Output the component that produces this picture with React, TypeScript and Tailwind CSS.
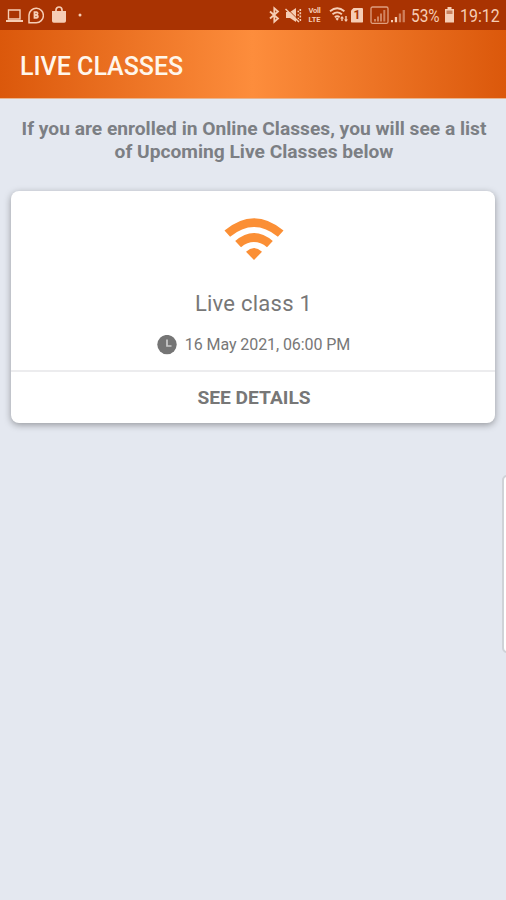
import type { ReactNode } from "react";

interface liveClassType {
  id: number;
  title: string;
  date: string;
}

const liveClasses: liveClassType[] = [
  { id: 1, title: "Live class 1", date: "16 May 2021, 06:00 PM" },
];

const Glyph = ({ width, className = "", children }: { width: number; className?: string; children: ReactNode }) => (
  <svg width={width} height={18} viewBox={`0 0 ${width} 18`} className={`shrink-0 ${className}`} fill="currentColor">
    {children}
  </svg>
);

const StatusBar = () => (
  <div className="flex h-[30px] items-center bg-[#a93302] text-[#f6cdb5]">
    <Glyph width={18} className="ml-[5px]">
      <path d="M3.5 4h11.5v9H3.5z" fill="none" stroke="currentColor" strokeWidth="1.4" />
      <path d="M1 14h17v2H1z" />
    </Glyph>
    <Glyph width={16} className="ml-[5px]">
      <path d="M1 16.7V9a7.2 7.2 0 1 1 7.2 7.7z" fill="none" stroke="currentColor" strokeWidth="1.5" />
      <path d="M5.6 5.3h3a2 2 0 0 1 1.2 3.5 2.1 2.1 0 0 1-1.2 3.9h-3z" />
      <path d="M7.5 7h1v1h-1zM7.5 10h1v1h-1z" className="fill-[#a93302]" />
    </Glyph>
    <Glyph width={16} className="ml-[7px]">
      <path d="M1 5h14v10a1.8 1.8 0 0 1-1.8 1.8H2.8A1.8 1.8 0 0 1 1 15z" />
      <path d="M5 7V4a3 3 0 0 1 6 0V7" fill="none" stroke="currentColor" strokeWidth="1.7" />
    </Glyph>
    <Glyph width={4} className="ml-[11px]">
      <circle cx="2" cy="9" r="1.5" />
    </Glyph>

    <div className="ml-auto flex items-center pr-[6px]">
      <Glyph width={11}>
        <path d="m1 5.5 8 7-3.7 3.3V2.2L9 5.5l-8 7" fill="none" stroke="currentColor" strokeWidth="1.8" />
      </Glyph>
      <Glyph width={17} className="ml-[5px]">
        <path d="M1 6h4l6-4v14l-6-4H1z" />
        <path d="M12.5 5.5h1.5M12.5 9h1.5M12.5 12.5h1.5M15.3 3v13" fill="none" stroke="currentColor" strokeWidth="1.6" strokeDasharray="2 1.3" />
        <path d="m2.5 3 12 12" fill="none" className="stroke-[#a93302]" strokeWidth="1" />
        <path d="m.5 3 13.5 13" fill="none" stroke="currentColor" strokeWidth="1.5" />
      </Glyph>
      <div className="ml-[4px] flex w-[17px] flex-col items-center gap-[2px] text-[7.5px] leading-[7px] font-bold whitespace-nowrap">
        <p className="h-[7px] overflow-hidden tracking-[-0.2px]">Voll</p>
        <p className="h-[7px] overflow-hidden">LTE</p>
      </div>
      <Glyph width={20} className="ml-[6px]">
        <path d="M1 5.2q7.2-6 14.4 0M3.5 8.3q4.7-3.9 9.4 0M5.8 11.2q2.4-2 4.8 0" fill="none" stroke="currentColor" strokeWidth="1.8" />
        <path d="m6.5 12.8 1.7-1 1.7 1-1.7 1.9z" />
        <path d="m11 12.5 2-2.5 2 2.5h-1.3V15h-1.4v-2.5zM15 13.5h1.3V10h1.4v3.5H19L17 16z" />
      </Glyph>
      <span className="ml-[2px] flex h-[15px] w-3 items-center justify-center rounded-[1px] bg-[#f6cdb5] text-[12px] font-bold text-[#a93302] [clip-path:polygon(3px_0,100%_0,100%_100%,0_100%,0_3px)]">
        1
      </span>
      <Glyph width={19} className="ml-[7px] opacity-70">
        <rect x="1" y="1" width="17" height="16.3" rx="1.5" fill="none" stroke="currentColor" strokeWidth="1.3" />
        <path d="M4 13h2v2.5H4zM7 10.5h2v5H7zM10 7.5h2v8h-2zM13.3 4h2v11.5h-2z" opacity=".75" />
      </Glyph>
      <Glyph width={16} className="ml-[1px]">
        <path d="M1 14h2v2.3H1zM4.8 11h2.3v5.3H4.8z" />
        <path d="M8.8 7.5h2.3v8.8H8.8zM12.6 4h2.3v12.3h-2.3z" opacity=".5" />
      </Glyph>
      <span className="mt-[3px] ml-[5px] w-[30px] origin-left scale-x-[.88] text-[17.5px] leading-none whitespace-nowrap">53%</span>
      <Glyph width={11} className="ml-[3px]">
        <path d="M3.5 1h4v2H10v13.5H1V3h2.5z" />
        <path d="M2.5 4.5h6V8h-6z" className="fill-[#c9805d]" />
      </Glyph>
      <span className="mt-[3px] ml-[5px] w-10 origin-left scale-x-[.91] text-[17.5px] leading-none whitespace-nowrap">19:12</span>
    </div>
  </div>
);

const Header = () => (
  <header className="flex h-[69px] items-center border-b border-[#e9b58f] bg-[linear-gradient(90deg,#db580b_0%,#fd8d3c_50%,#db580b_100%)] pt-[5px] pl-5">
    <h1 className="text-[25px] font-medium text-[#fff6eb]">LIVE CLASSES</h1>
  </header>
);

const ClassCard = ({ title, date }: { title: string; date: string }) => (
  <div className="mx-[11px] flex h-[232px] flex-col items-center rounded-lg bg-white text-[#777] shadow-[0_2px_7px_rgba(0,0,0,0.35)]">
    <svg width="60" height="44" viewBox="0 0 60 44" className="mt-[26px] ml-[1px] shrink-0 text-[#fb8f35]" fill="currentColor">
      <path d="M.5 13.5Q30-11 59.5 13.5l-5.6 6.2Q30 .3 6.1 19.7z" />
      <path d="M11.2 24Q30 8 48.8 24L43 30.2q-13-10.2-26 0z" />
      <path d="M22 34.8q8-7.4 16 0L30 43z" />
    </svg>
    <h2 className="mt-[27px] ml-[1px] text-[22px] leading-8 tracking-[0.25px]">{title}</h2>
    <div className="mt-[13px] ml-[1px] flex h-6 items-center text-base">
      <svg width="20" height="20" viewBox="0 0 20 20" className="mr-2">
        <circle cx="10" cy="9.6" r="9.7" fill="#757575" />
        <path d="M10 4.5V11h4.5" fill="none" stroke="#ccc" strokeWidth="1.7" />
      </svg>
      <span className="tracking-[-0.08px]">{date}</span>
    </div>
    <button className="mt-auto h-[53px] w-full border-t-2 border-[#ececee] pt-[2px] pl-[2px] text-[19.2px] font-bold">SEE DETAILS</button>
  </div>
);

export default function App() {
  return (
    <div className="relative h-[900px] w-full overflow-hidden bg-[#e4e8f0] font-[Roboto,sans-serif]">
      <StatusBar />
      <Header />
      <p className="mx-auto mt-[19px] mb-[28px] w-[480px] pl-[2px] text-center text-[19.2px] leading-[22.5px] font-bold text-[#7c7f84]">
        If you are enrolled in Online Classes, you will see a list of Upcoming Live Classes below
      </p>
      {liveClasses.map((item) => (
        <ClassCard key={item.id} title={item.title} date={item.date} />
      ))}
      <div className="absolute top-[475px] -right-1 h-[178px] w-2 rounded-l-[5px] border-2 border-[#cfd2d7] bg-white" />
    </div>
  );
}
